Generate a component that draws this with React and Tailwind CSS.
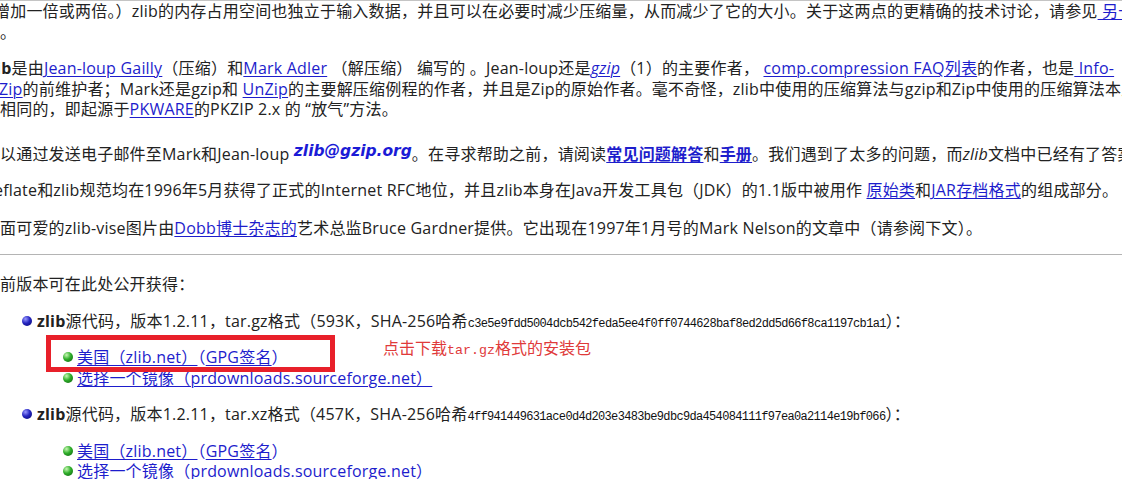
import React from "react";

const A = "text-[#1d1dcc] underline decoration-1 underline-offset-[2px]";

function Ball({ kind }) {
  return kind === "blue" ? (
    <span className="inline-block w-[10px] h-[10px] rounded-full shrink-0 bg-[radial-gradient(circle_at_35%_30%,#9a9aff_0%,#2525c0_45%,#05056a_100%)]" />
  ) : (
    <span className="inline-block w-[10px] h-[10px] rounded-full shrink-0 bg-[radial-gradient(circle_at_35%_30%,#c8f7b4_0%,#2fae2a_45%,#0b5a0b_100%)]" />
  );
}

function Hash({ children }) {
  return (
    <span className="font-['Liberation_Mono',monospace] text-[12px] tracking-[-0.67px] leading-none text-[#111]">
      {children}
    </span>
  );
}

function SubList() {
  return (
    <ul className="mt-[16px] pl-[41px]">
      <li className="flex items-center gap-[4px] whitespace-nowrap">
        <Ball kind="green" />
        <span>
          <a className={A}>美国（zlib.net）</a>
          <span className="text-[#1d1dcc]">（</span>
          <a className={A}>GPG签名</a>
          <span className="text-[#1d1dcc]">）</span>
        </span>
      </li>
      <li className="flex items-center gap-[4px] whitespace-nowrap">
        <Ball kind="green" />
        <a className={A}>选择一个镜像（prdownloads.sourceforge.net）</a>
      </li>
    </ul>
  );
}

export default function App() {
  return (
    <div className="w-[1122px] h-[479px] overflow-hidden bg-white border-t border-[#c4c4c4] font-['Open_Sans','Noto_Sans_CJK_SC',sans-serif] text-[16px] tracking-[0.2px] leading-[20.5px] text-[#222]">
      {/* paragraph tail */}
      <div className="whitespace-nowrap -ml-[6px]">
        增加一倍或两倍。）zlib的内存占用空间也独立于输入数据，并且可以在必要时减少压缩量，从而减少了它的大小。关于这两点的更精确的技术讨论，请参见<a className={A}> 另一页</a>
      </div>
      <div className="whitespace-nowrap">。</div>

      {/* authors */}
      <div className="mt-[16px]">
        <div className="whitespace-nowrap -ml-[17px]">
          <b>zlib</b>是由<a className={A}>Jean-loup Gailly</a>（压缩）和<a className={A}>Mark Adler</a> （解压缩） 编写的 。Jean-loup还是<a className={A + " italic"}>gzip</a>（1）的主要作者， <a className={A}>comp.compression FAQ列表</a>的作者，也是<a className={A}> Info-</a>
        </div>
        <div className="whitespace-nowrap -ml-[1px]">
          <a className={A}>Zip</a>的前维护者；Mark还是gzip和 <a className={A}>UnZip</a>的主要解压缩例程的作者，并且是Zip的原始作者。毫不奇怪，zlib中使用的压缩算法与gzip和Zip中使用的压缩算法本质上是
        </div>
        <div className="whitespace-nowrap">
          相同的，即起源于<a className={A}>PKWARE</a>的PKZIP 2.x 的 “放气”方法。
        </div>
      </div>

      {/* contact */}
      <div className="mt-[24px] whitespace-nowrap">
        以通过发送电子邮件至Mark和Jean-loup{" "}
        <span className="inline-block align-[4px] leading-none tracking-normal font-['DejaVu_Sans',sans-serif] font-bold italic text-[15.5px] text-[#1b1bd6]">
          zlib@gzip.org
        </span>
        。在寻求帮助之前，请阅读<a className={A + " font-bold"}>常见问题解答</a>和<a className={A + " font-bold"}>手册</a>。我们遇到了太多的问题，而<i>zlib</i>文档中已经有了答案
      </div>

      <div className="mt-[16px] whitespace-nowrap -ml-[16px]">
        deflate和zlib规范均在1996年5月获得了正式的Internet RFC地位，并且zlib本身在Java开发工具包（JDK）的1.1版中被用作 <a className={A}>原始类</a>和<a className={A}>JAR存档格式</a>的组成部分。
      </div>

      <div className="mt-[17px] whitespace-nowrap">
        面可爱的zlib-vise图片由<a className={A}>Dobb博士杂志的</a>艺术总监Bruce Gardner提供。它出现在1997年1月号的Mark Nelson的文章中（请参阅下文）。
      </div>

      <div className="mt-[16px] h-px bg-[#b4b4b4]" />

      <div className="mt-[19px] whitespace-nowrap">前版本可在此处公开获得：</div>

      <div className="relative mt-[16px]">
        <ul className="pl-[22px]">
          <li className="flex items-center gap-[5px] whitespace-nowrap">
            <Ball kind="blue" />
            <span>
              <b>zlib</b>源代码，版本1.2.11，tar.gz格式（593K，SHA-256哈希
              <Hash>c3e5e9fdd5004dcb542feda5ee4f0ff0744628baf8ed2dd5d66f8ca1197cb1a1</Hash>）：
            </span>
          </li>
          <li>
            <SubList />
          </li>
          <li className="mt-[16px] flex items-center gap-[5px] whitespace-nowrap">
            <Ball kind="blue" />
            <span>
              <b>zlib</b>源代码，版本1.2.11，tar.xz格式（457K，SHA-256哈希
              <Hash>4ff941449631ace0d4d203e3483be9dbc9da454084111f97ea0a2114e19bf066</Hash>）：
            </span>
          </li>
          <li>
            <SubList />
          </li>
        </ul>

        {/* annotation overlay */}
        <div className="absolute left-[46px] top-[24px] w-[289px] h-[37px] border-[5px] border-[#e8202a]" />
        <div className="absolute left-[383px] top-[26px] whitespace-nowrap tracking-normal text-[16px] leading-[20px] text-[#e03a3a] font-['Noto_Sans_CJK_SC',sans-serif]">
          点击下载<span className="font-['Liberation_Mono',monospace] text-[13.3px]">tar.gz</span>格式的安装包
        </div>
      </div>
    </div>
  );
}
